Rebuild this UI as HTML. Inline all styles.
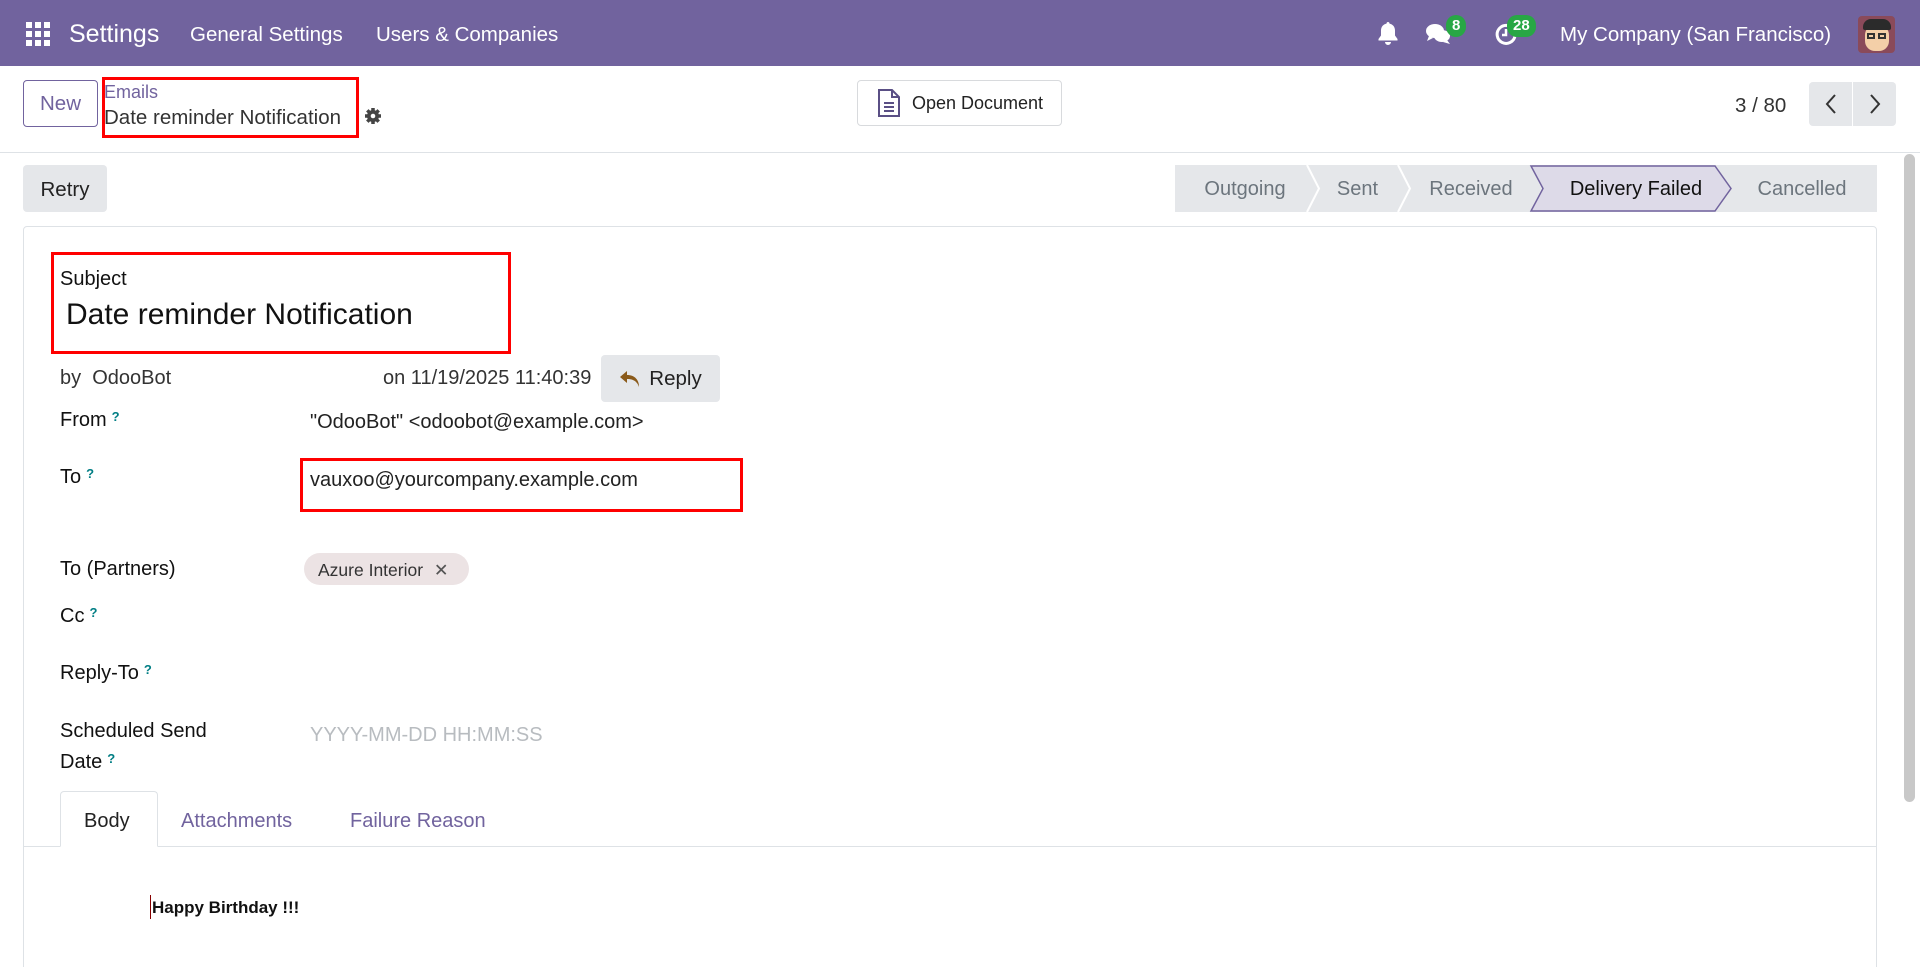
<!DOCTYPE html>
<html style="width:1920px;height:967px;overflow:hidden"><head><meta charset="utf-8"><style>
*{box-sizing:border-box;margin:0;padding:0}
body{width:1920px;height:967px;overflow:hidden;background:#fff;font-family:"Liberation Sans",Arial,sans-serif;color:#212529;position:relative}
.a{position:absolute;white-space:nowrap}
.nav{position:absolute;left:0;top:0;width:1920px;height:66px;background:#71639e}
.nav .a{color:#fff}
.badge{position:absolute;background:#28a745;color:#fff;border-radius:10px;font-size:15px;height:22px;line-height:22px;padding:0 6px;font-weight:bold}
.btn{position:absolute;border-radius:4px;display:flex;align-items:center;justify-content:center}
.lbl{position:absolute;font-size:20px;color:#111;font-weight:500}
.q{color:#017e84;font-size:13px;vertical-align:top;margin-left:5px;font-weight:bold}
.seg{position:absolute;top:166px;height:47px;display:flex;align-items:center;justify-content:center;font-size:20px;color:#6c757d}
</style></head><body>
<div class="nav">
 <svg class="a" style="left:26px;top:22px" width="24" height="24" viewBox="0 0 24 24" fill="#fff">
  <rect x="0" y="0" width="6" height="6"/><rect x="9" y="0" width="6" height="6"/><rect x="18" y="0" width="6" height="6"/>
  <rect x="0" y="9" width="6" height="6"/><rect x="9" y="9" width="6" height="6"/><rect x="18" y="9" width="6" height="6"/>
  <rect x="0" y="18" width="6" height="6"/><rect x="9" y="18" width="6" height="6"/><rect x="18" y="18" width="6" height="6"/></svg>
 <div class="a" style="left:69px;top:20px;font-size:25px">Settings</div>
 <div class="a" style="left:190px;top:23px;font-size:20.5px">General Settings</div>
 <div class="a" style="left:376px;top:23px;font-size:20.5px">Users &amp; Companies</div>
 <svg class="a" style="left:1377px;top:21px" width="22" height="24" viewBox="0 0 22 24" fill="#fff"><path d="M11 1c-1 0-1.5.8-1.5 1.6C6 3.4 4 6 4 9.5v5L1.5 18v1.5h19V18L18 14.5v-5c0-3.5-2-6.1-5.5-6.9C12.5 1.8 12 1 11 1zM8 21a3 3 0 0 0 6 0z"/></svg>
 <svg class="a" style="left:1425px;top:22px" width="28" height="24" viewBox="0 0 28 24" fill="#fff"><ellipse cx="10" cy="9" rx="9" ry="7"/><path d="M4 14l-2 5 6-3z"/><ellipse cx="17" cy="14" rx="8" ry="6"/><path d="M22 18l3 4-7-2z"/></svg>
 <div class="badge" style="left:1446px;top:15px">8</div>
 <svg class="a" style="left:1494px;top:22px" width="24" height="24" viewBox="0 0 24 24" fill="none" stroke="#fff" stroke-width="3"><path d="M20 8A9 9 0 1 0 21 14"/><path d="M12 7v6h-4" stroke-width="2.5"/></svg>
 <div class="badge" style="left:1507px;top:15px">28</div>
 <div class="a" style="left:1560px;top:23px;font-size:20.5px">My Company (San Francisco)</div>
 <div class="a" style="left:1858px;top:16px;width:37px;height:37px;border-radius:4px;background:#8a4a5a;overflow:hidden">
  <div style="position:absolute;left:7px;top:9px;width:24px;height:26px;border-radius:10px;background:#f4cfa8"></div>
  <div style="position:absolute;left:5px;top:3px;width:28px;height:11px;border-radius:8px 8px 2px 2px;background:#2b2b2b"></div>
  <div style="position:absolute;left:9px;top:17px;width:8px;height:6px;border:2px solid #333"></div>
  <div style="position:absolute;left:20px;top:17px;width:8px;height:6px;border:2px solid #333"></div>
 </div>
</div>

<div class="btn" style="left:23px;top:80px;width:75px;height:47px;border:1px solid #71639e;color:#71639e;font-size:20.5px">New</div>
<div class="a" style="left:104px;top:82px;font-size:18px;color:#71639e">Emails</div>
<div class="a" style="left:104px;top:106px;font-size:20.5px;color:#333">Date reminder Notification</div>
<div class="a" style="left:102px;top:77px;width:257px;height:61px;border:3px solid #f00"></div>
<svg class="a" style="left:364px;top:107px" width="18" height="18" viewBox="0 0 18 18"><circle cx="9" cy="9" r="6" fill="#444"/><g stroke="#444" stroke-width="3.5"><path d="M9 1v16M1 9h16M3.3 3.3l11.4 11.4M14.7 3.3L3.3 14.7"/></g><circle cx="9" cy="9" r="2.3" fill="#fff"/></svg>
<div class="btn" style="left:857px;top:80px;width:205px;height:46px;border:1px solid #d8dadd;font-size:18px;color:#222"><svg width="26" height="30" viewBox="0 0 26 30" style="margin-right:10px"><path d="M3 2h13l7 7v19H3z M16 2v7h7" fill="none" stroke="#5a4f85" stroke-width="2"/><path d="M8 15h10M8 19h10M8 23h10" stroke="#5a4f85" stroke-width="2"/></svg>Open Document</div>
<div class="a" style="left:1735px;top:94px;font-size:20.5px;color:#333">3 / 80</div>
<div class="btn" style="left:1809px;top:82px;width:43px;height:44px;background:#e5e7ea;border-radius:4px 0 0 4px"><svg width="14" height="22" viewBox="0 0 14 22"><path d="M11 2L3 11l8 9" fill="none" stroke="#333" stroke-width="2"/></svg></div>
<div class="btn" style="left:1853px;top:82px;width:43px;height:44px;background:#e5e7ea;border-radius:0 4px 4px 0"><svg width="14" height="22" viewBox="0 0 14 22"><path d="M3 2l8 9-8 9" fill="none" stroke="#333" stroke-width="2"/></svg></div>
<div class="a" style="left:0;top:152px;width:1920px;height:1px;background:#dee2e6"></div>

<div class="btn" style="left:23px;top:165px;width:84px;height:47px;background:#e5e7ea;font-size:20.5px;color:#222;padding-top:2px">Retry</div>
<svg class="a" style="left:1175px;top:165px" width="702" height="47" viewBox="0 0 702 47">
 <rect x="0" y="0" width="702" height="47" fill="#e5e7ea"/>
 <path d="M132 0l12 23.5L132 47M223 0l12 23.5L223 47M356 0l12 23.5L356 47" fill="none" stroke="#fff" stroke-width="2"/>
 <path d="M356 1h184l16 22.5L540 46H356l12-22.5z" fill="#dddae8" stroke="#71639e" stroke-width="1.5"/>
</svg>
<div class="seg" style="left:1175px;width:140px">Outgoing</div>
<div class="seg" style="left:1307px;width:101px">Sent</div>
<div class="seg" style="left:1398px;width:146px">Received</div>
<div class="seg" style="left:1531px;width:210px;color:#111">Delivery Failed</div>
<div class="seg" style="left:1727px;width:150px">Cancelled</div>

<div class="a" style="left:23px;top:226px;width:1854px;height:745px;border:1px solid #dee2e6;border-radius:4px"></div>
<div class="a" style="left:1904px;top:154px;width:11px;height:648px;background:#c8c8c8;border-radius:6px"></div>

<div class="a" style="left:51px;top:252px;width:460px;height:102px;border:3px solid #f00"></div>
<div class="lbl" style="left:60px;top:268px">Subject</div>
<div class="a" style="left:66px;top:298px;font-size:30px;color:#111">Date reminder Notification</div>

<div class="a" style="left:60px;top:367px;font-size:20px;color:#333">by&nbsp;&nbsp;OdooBot</div>
<div class="a" style="left:383px;top:367px;font-size:20px;color:#333">on 11/19/2025 11:40:39</div>
<div class="btn" style="left:601px;top:355px;width:119px;height:47px;background:#e5e7ea;font-size:20.5px;color:#222"><svg width="22" height="18" viewBox="0 0 22 18" style="margin-right:8px"><path d="M8 1L1 7l7 6V9c6 0 10 2 12 8 0-7-4-12-12-12z" fill="#8a5a1a"/></svg>Reply</div>

<div class="lbl" style="left:60px;top:409px">From<span class="q">?</span></div>
<div class="a" style="left:310px;top:411px;font-size:20px;color:#222">"OdooBot" &lt;odoobot@example.com&gt;</div>
<div class="lbl" style="left:60px;top:466px">To<span class="q">?</span></div>
<div class="a" style="left:300px;top:458px;width:443px;height:54px;border:3px solid #f00"></div>
<div class="a" style="left:310px;top:469px;font-size:20px;color:#222">vauxoo@yourcompany.example.com</div>
<div class="lbl" style="left:60px;top:558px">To (Partners)</div>
<div class="a" style="left:304px;top:553px;width:165px;height:32px;border-radius:16px;background:#ece3e4;font-size:17.5px;color:#333;padding:7px 0 0 14px">Azure Interior <span style="margin-left:6px;color:#555">✕</span></div>
<div class="lbl" style="left:60px;top:605px">Cc<span class="q">?</span></div>
<div class="lbl" style="left:60px;top:662px">Reply-To<span class="q">?</span></div>
<div class="lbl" style="left:60px;top:720px">Scheduled Send</div>
<div class="lbl" style="left:60px;top:751px">Date<span class="q">?</span></div>
<div class="a" style="left:310px;top:724px;font-size:20px;color:#b8bcc0">YYYY-MM-DD HH:MM:SS</div>

<div class="a" style="left:23px;top:846px;width:1854px;height:1px;background:#dee2e6"></div>
<div class="a" style="left:60px;top:791px;width:98px;height:56px;border:1px solid #dee2e6;border-bottom:1px solid #fff;border-radius:4px 4px 0 0;background:#fff"></div>
<div class="a" style="left:84px;top:810px;font-size:20px;color:#222">Body</div>
<div class="a" style="left:181px;top:810px;font-size:20px;color:#71639e">Attachments</div>
<div class="a" style="left:350px;top:810px;font-size:20px;color:#71639e">Failure Reason</div>
<div class="a" style="left:150px;top:895px;width:1px;height:24px;background:#800"></div>
<div class="a" style="left:152px;top:898px;font-size:17px;font-weight:bold;color:#111">Happy Birthday !!!</div>
</body></html>
